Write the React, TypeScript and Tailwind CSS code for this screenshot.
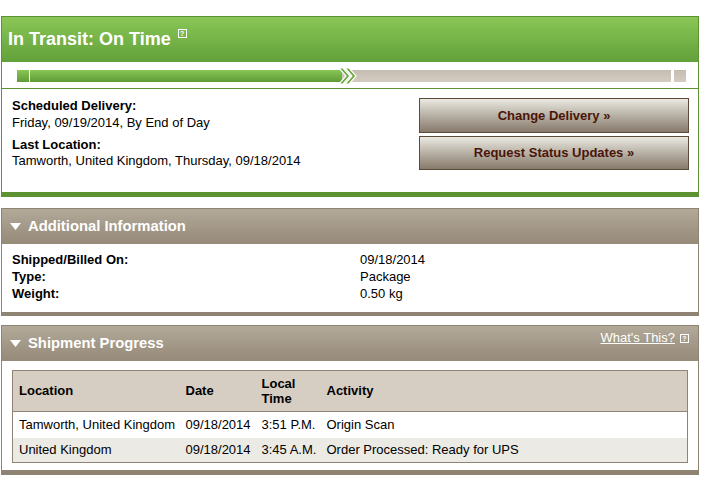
import React from 'react'

const font = { fontFamily: '"Liberation Sans", Arial, Helvetica, sans-serif' }

function HelpIcon({ className = '' }: { className?: string }) {
  return (
    <span
      className={`inline-flex h-[9px] w-[9px] items-center justify-center border border-white text-[7px] font-bold leading-none text-white ${className}`}
    >
      ?
    </span>
  )
}

function Triangle() {
  return (
    <svg width="11" height="7" viewBox="0 0 11 7" className="shrink-0">
      <polygon points="0,0 11,0 5.5,7" fill="#ffffff" />
    </svg>
  )
}

function Chevron() {
  return (
    <svg width="20" height="18" viewBox="0 0 20 18" className="absolute left-[-4px] top-[-3px]">
      <polygon points="1,1 5,1 12,9 5,17 1,17 8,9" fill="#6aa73d" stroke="#ffffff" strokeWidth="1.2" strokeLinejoin="miter" />
      <polygon points="7,1 11,1 18,9 11,17 7,17 14,9" fill="#6aa73d" stroke="#ffffff" strokeWidth="1.2" strokeLinejoin="miter" />
    </svg>
  )
}

function ProgressBar() {
  return (
    <div className="flex h-[12px] items-stretch">
      <div className="w-[12px] bg-gradient-to-b from-[#88c656] to-[#5f9c36]" />
      <div className="w-px bg-white" />
      <div className="w-[312px] bg-gradient-to-b from-[#88c656] to-[#5f9c36]" />
      <div className="relative flex-1 bg-gradient-to-b from-[#c6bdb1] to-[#d4ccc1]">
        <Chevron />
      </div>
      <div className="w-[3px] bg-white" />
      <div className="w-[12px] bg-gradient-to-b from-[#c6bdb1] to-[#d4ccc1]" />
    </div>
  )
}

function BrownButton({ label }: { label: string }) {
  return (
    <button className="flex w-[270px] items-center justify-center border border-[#5b4b38] bg-gradient-to-b from-[#ebe9e2] to-[#877b6c] text-[13px] font-bold text-[#4a1508]">
      {label}
    </button>
  )
}

function BrownHeader({ title, right }: { title: string; right?: React.ReactNode }) {
  return (
    <div className="flex h-[35px] items-center bg-gradient-to-b from-[#b2a998] to-[#968a79] pl-[8px] pr-[9px]">
      <Triangle />
      <span className="ml-[7px] text-[14.8px] font-bold text-white">{title}</span>
      <div className="ml-auto">{right}</div>
    </div>
  )
}

const rows = [
  { location: 'Tamworth, United Kingdom', date: '09/18/2014', time: '3:51 P.M.', activity: 'Origin Scan' },
  { location: 'United Kingdom', date: '09/18/2014', time: '3:45 A.M.', activity: 'Order Processed: Ready for UPS' },
]

export default function App() {
  return (
    <div className="h-[481px] w-[707px] overflow-hidden bg-white pt-[16px] text-[13px] text-black" style={font}>
      {/* status panel */}
      <div className="ml-px w-[698px] border-x border-t border-b-[5px] border-[#5d9233]">
        <div className="flex h-[45px] items-center bg-gradient-to-b from-[#8ac757] to-[#62a03a] px-[6px]">
          <span className="text-[18px] font-bold text-white">In Transit: On Time</span>
          <HelpIcon className="mb-[12px] ml-[7px]" />
        </div>
        <div className="pb-[6px] pl-[15px] pr-[12px] pt-[8px]">
          <ProgressBar />
        </div>
        <div className="h-px bg-[#5d9233]" />
        <div className="flex justify-between pb-[22px] pl-[10px] pr-[9px] pt-[8px]">
          <div>
            <div className="font-bold leading-[17px]">Scheduled Delivery:</div>
            <div className="leading-[17px]">Friday, 09/19/2014, By End of Day</div>
            <div className="mt-[6px] font-bold leading-[16px]">Last Location:</div>
            <div className="leading-[16px]">Tamworth, United Kingdom, Thursday, 09/18/2014</div>
          </div>
          <div className="flex flex-col gap-[3px] pt-px">
            <div className="flex h-[35px]">
              <BrownButton label="Change Delivery »" />
            </div>
            <div className="flex h-[34px]">
              <BrownButton label="Request Status Updates »" />
            </div>
          </div>
        </div>
      </div>

      {/* additional information */}
      <div className="ml-px mt-[11px] w-[698px] border-x border-t border-b-[4px] border-[#8f8474]">
        <BrownHeader title="Additional Information" />
        <div className="grid grid-cols-[348px_1fr] pb-[10px] pl-[10px] pt-[7px] leading-[17px]">
          <div className="font-bold">Shipped/Billed On:</div>
          <div>09/18/2014</div>
          <div className="font-bold">Type:</div>
          <div>Package</div>
          <div className="font-bold">Weight:</div>
          <div>0.50 kg</div>
        </div>
      </div>

      {/* shipment progress */}
      <div className="ml-px mt-[9px] w-[698px] border-x border-t border-b-[5px] border-[#8f8474]">
        <BrownHeader
          title="Shipment Progress"
          right={
            <div className="mb-[11px] flex items-center">
              <span className="text-[13px] text-white underline">What's This?</span>
              <HelpIcon className="ml-[5px]" />
            </div>
          }
        />
        <div className="px-[10px] pb-[7px] pt-[9px]">
          <table className="w-full border-collapse border border-[#8f8474] text-left">
            <thead>
              <tr className="h-[41px] border-b border-[#8f8474] bg-[#d6cec2]">
                <th className="w-[167px] pl-[6px] font-bold">Location</th>
                <th className="w-[76px] pl-[6px] font-bold">Date</th>
                <th className="w-[66px] pl-[6px] font-bold leading-[15px]">
                  Local
                  <br />
                  Time
                </th>
                <th className="pl-[5px] font-bold">Activity</th>
              </tr>
            </thead>
            <tbody>
              {rows.map((r, i) => (
                <tr key={i} className={i % 2 === 0 ? 'h-[26px] bg-white' : 'h-[25px] bg-[#ebeae5]'}>
                  <td className="pl-[6px]">{r.location}</td>
                  <td className="pl-[6px]">{r.date}</td>
                  <td className="pl-[6px]">{r.time}</td>
                  <td className="pl-[5px]">{r.activity}</td>
                </tr>
              ))}
            </tbody>
          </table>
        </div>
      </div>
    </div>
  )
}
